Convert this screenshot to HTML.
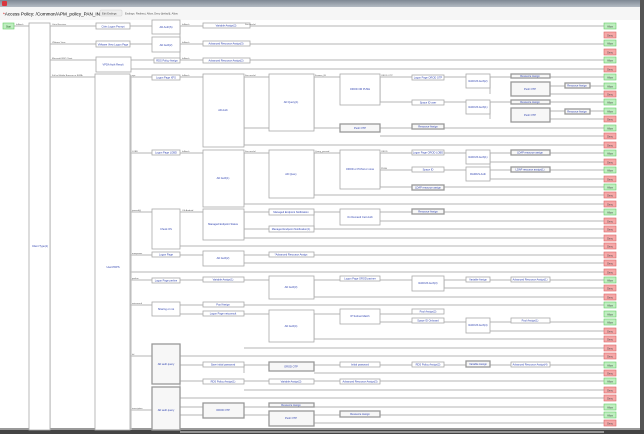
<!DOCTYPE html>
<html><head><meta charset="utf-8"><style>
html,body{margin:0;padding:0;background:#fff;width:644px;height:434px;overflow:hidden;font-family:"Liberation Sans",sans-serif}
</style></head><body>
<svg width="644" height="434" viewBox="0 0 644 434" xmlns="http://www.w3.org/2000/svg" style="display:block">
<defs><linearGradient id="tb" x1="0" y1="0" x2="0" y2="1"><stop offset="0" stop-color="#7e8894"/><stop offset="1" stop-color="#b4bbc3"/></linearGradient></defs>
<rect x="0" y="0" width="644" height="434" fill="#fff"/>
<rect x="0" y="0" width="644" height="7" fill="url(#tb)"/>
<rect x="2" y="1" width="5" height="5" rx="1" fill="#d9363e"/>
<rect x="0" y="7" width="640" height="13" fill="#f6f6f6"/>
<text x="3" y="15.5" font-size="4.6" fill="#000"><tspan fill="#c00">*</tspan>Access Policy: /Common/APM_policy_PAN_IN</text>
<rect x="100" y="10" width="22" height="6" rx="1" fill="#eee" stroke="#ccc" stroke-width=".5"/>
<text x="102" y="14.5" font-size="2.6" fill="#444">Edit Endings</text>
<text x="125" y="14.5" font-size="2.6" fill="#555">Endings: Redirect, Allow, Deny [default], Allow</text>
<rect x="640" y="0" width="4" height="434" fill="#555"/>
<rect x="0" y="430" width="644" height="4" fill="#444"/>
<rect x="0" y="428" width="640" height="2" fill="#999"/>

<g stroke="#c4c4c4" stroke-width="1.2" fill="none">
<path d="M250 26H604M14 26H29M50 26H96M130 26H152M180 26H203M50 44H96M130 44H152M180 44H203M250 44H604M50 60H96M131 60H154M180 60H203M250 60H604M131 69H604M50 77H95M130 77H152M180 77H203M244 77H269M314 77H340M380 77H412M444 77H466M490 77H511M550 77H604M550 86H565M590 86H604M550 94H604M380 102H412M444 102H466M490 102H511M550 102H604M550 111H565M590 111H604M550 119H604M244 128H340M380 128H412M444 128H604M380 136H604M244 145H604M130 153H152M180 153H203M244 153H269M314 153H340M380 153H412M444 153H466M490 153H511M550 153H604M490 162H604M380 170H412M444 170H466M490 170H511M550 170H604M490 179H604M380 187H412M444 187H604M314 195H604M244 204H604M130 212H152M180 212H203M244 212H269M314 212H340M380 212H412M444 212H604M380 221H604M244 229H269M314 229H604M244 238H604M180 246H604M130 255H152M180 255H203M244 255H269M314 255H604M244 263H604M130 272H604M130 280H152M180 280H203M244 280H269M314 280H340M380 280H412M444 280H466M490 280H511M550 280H604M444 288H604M314 297H604M130 305H152M180 305H203M244 305H604M180 314H203M244 314H269M314 314H340M380 314H412M380 322H412M444 322H466M490 322H511M550 322H604M490 331H604M314 339H604M244 348H604M130 356H152M180 356H604M180 365H203M244 365H269M314 365H340M380 365H412M444 365H466M490 365H511M550 365H604M314 373H604M180 381H203M244 381H269M314 381H340M380 381H604M244 390H604M130 410H152M180 398H604M180 407H203M244 407H269M314 407H604M180 415H203M244 415H269M314 415H340M380 415H604M314 423H604M180 432H604"/>
<path d="M50 26V430M131 75V430M180 26V60M244 77V145M244 153V204M244 212V238M314 77V128M314 153V195M314 212V229M380 77V102M380 153V187M490 77V94M490 102V119M490 153V179M444 280V288M314 280V297M314 314V339M244 365V373M180 344V398"/>
</g>

<g fill="#fff" stroke="#aaa" stroke-width=".8">
<rect x="29" y="23" width="21" height="407"/>
<rect x="96" y="23" width="34" height="6"/>
<rect x="96" y="41" width="34" height="6"/>
<rect x="96" y="57" width="35" height="15"/>
<rect x="95" y="74" width="35" height="356"/>
<rect x="152" y="20" width="28" height="14"/>
<rect x="152" y="37" width="28" height="15"/>
<rect x="154" y="58" width="26" height="5"/>
<rect x="152" y="75" width="28" height="5"/>
<rect x="152" y="150" width="28" height="5"/>
<rect x="152" y="209" width="28" height="40"/>
<rect x="152" y="252" width="28" height="5"/>
<rect x="152" y="278" width="28" height="5"/>
<rect x="152" y="302" width="28" height="14"/>
<rect x="203" y="23" width="47" height="5"/>
<rect x="203" y="41" width="47" height="5"/>
<rect x="203" y="58" width="47" height="5"/>
<rect x="203" y="74" width="41" height="73"/>
<rect x="203" y="150" width="41" height="57"/>
<rect x="203" y="209" width="41" height="31"/>
<rect x="203" y="251" width="41" height="15"/>
<rect x="203" y="277" width="41" height="5"/>
<rect x="203" y="302" width="41" height="5"/>
<rect x="203" y="311" width="41" height="5"/>
<rect x="203" y="362" width="41" height="5"/>
<rect x="203" y="379" width="41" height="5"/>
<rect x="269" y="74" width="45" height="57"/>
<rect x="269" y="150" width="45" height="48"/>
<rect x="269" y="209" width="45" height="6"/>
<rect x="269" y="226" width="45" height="6"/>
<rect x="269" y="252" width="45" height="5"/>
<rect x="269" y="276" width="45" height="23"/>
<rect x="269" y="310" width="45" height="32"/>
<rect x="269" y="379" width="45" height="5"/>
<rect x="340" y="74" width="40" height="31"/>
<rect x="340" y="150" width="40" height="39"/>
<rect x="340" y="209" width="40" height="16"/>
<rect x="340" y="276" width="40" height="5"/>
<rect x="340" y="309" width="40" height="15"/>
<rect x="340" y="362" width="40" height="5"/>
<rect x="340" y="379" width="40" height="5"/>
<rect x="412" y="75" width="32" height="5"/>
<rect x="412" y="100" width="32" height="5"/>
<rect x="412" y="150" width="32" height="5"/>
<rect x="412" y="167" width="32" height="5"/>
<rect x="412" y="276" width="32" height="15"/>
<rect x="412" y="309" width="32" height="5"/>
<rect x="412" y="318" width="32" height="5"/>
<rect x="412" y="362" width="32" height="5"/>
<rect x="466" y="74" width="24" height="14"/>
<rect x="466" y="100" width="24" height="14"/>
<rect x="466" y="150" width="24" height="14"/>
<rect x="466" y="167" width="24" height="14"/>
<rect x="466" y="277" width="24" height="5"/>
<rect x="466" y="318" width="24" height="15"/>
<rect x="511" y="277" width="39" height="5"/>
<rect x="511" y="318" width="39" height="5"/>
<rect x="511" y="362" width="39" height="5"/>
</g>
<g fill="#f7f7f7" stroke="#999" stroke-width="1.3">
<rect x="152" y="344" width="28" height="40"/>
<rect x="152" y="387" width="28" height="43"/>
<rect x="203" y="403" width="41" height="15"/>
<rect x="269" y="362" width="45" height="9"/>
<rect x="269" y="403" width="45" height="4"/>
<rect x="269" y="411" width="45" height="15"/>
<rect x="340" y="124" width="40" height="8"/>
<rect x="340" y="411" width="40" height="6"/>
<rect x="412" y="124" width="32" height="5"/>
<rect x="412" y="185" width="32" height="5"/>
<rect x="412" y="209" width="32" height="5"/>
<rect x="466" y="361" width="24" height="6"/>
<rect x="511" y="74" width="39" height="4"/>
<rect x="511" y="82" width="39" height="14"/>
<rect x="511" y="100" width="39" height="4"/>
<rect x="511" y="108" width="39" height="14"/>
<rect x="511" y="150" width="39" height="5"/>
<rect x="511" y="167" width="39" height="5"/>
<rect x="565" y="83" width="25" height="5"/>
<rect x="565" y="109" width="25" height="5"/>
</g>

<g font-size="2.6" fill="#2b3fae" text-anchor="middle">
<text x="113" y="27.5">Citrix Logon Prompt</text>
<text x="113" y="45.5">VMware View Logon Page</text>
<text x="113" y="65.5">VPDA Auth Result</text>
<text x="113" y="268">User.PDPS</text>
<text x="40" y="247">Client Type(1)</text>
<text x="166" y="28">AD Auth(S)</text>
<text x="166" y="46">AD Auth(2)</text>
<text x="167" y="61.5">RDS Policy Assign</text>
<text x="166" y="78.5">Logon Page XFS</text>
<text x="166" y="153.5">Logon Page LOBD</text>
<text x="166" y="230">Check OS</text>
<text x="166" y="255.5">Logon Page</text>
<text x="166" y="281.5">Logon Page perline</text>
<text x="166" y="310">Sharing or not</text>
<text x="166" y="365">AD auth query</text>
<text x="166" y="411">AD auth query</text>
<text x="226" y="26.5">Variable Assign(2)</text>
<text x="226" y="44.5">Advanced Resource Assign(3)</text>
<text x="226" y="61.5">Advanced Resource Assign(2)</text>
<text x="223" y="111">AD Auth</text>
<text x="223" y="179">AD Auth(1)</text>
<text x="223" y="225">Managed Endpoint Status</text>
<text x="223" y="259">AD Auth(2)</text>
<text x="223" y="280.5">Variable Assign(1)</text>
<text x="223" y="305.5">Pool Assign</text>
<text x="223" y="314.5">Logon Page netconsult</text>
<text x="223" y="365.5">Save initial password</text>
<text x="223" y="382.5">RDS Policy Assign(1)</text>
<text x="223" y="411">OROD OTP</text>
<text x="291" y="103">AD Query(1)</text>
<text x="291" y="175">AD Query</text>
<text x="291" y="213">Managed Endpoint Notification</text>
<text x="291" y="230">Managed Endpoint Notification(1)</text>
<text x="291" y="255.5">*Advanced Resource Assign</text>
<text x="291" y="288">AD Auth(3)</text>
<text x="291" y="327">AD Auth(4)</text>
<text x="291" y="367.5">OROD OTP</text>
<text x="291" y="382.5">Variable Assign(2)</text>
<text x="291" y="406">Resource Assign</text>
<text x="291" y="419">Push OTP</text>
<text x="360" y="90">OROD OR PUSH</text>
<text x="360" y="129">Push OTP</text>
<text x="360" y="170">OROD or PUSH or none</text>
<text x="360" y="218">On Demand Cert Auth</text>
<text x="360" y="279.5">Logon Page OROD partner</text>
<text x="360" y="317">IP Subnet Match</text>
<text x="360" y="365.5">Initial password</text>
<text x="360" y="382.5">Advanced Resource Assign(3)</text>
<text x="360" y="415">Resource Assign</text>
<text x="428" y="78.5">Logon Page OROD OTP</text>
<text x="428" y="103.5">Space ID user</text>
<text x="428" y="127.5">Resource Assign</text>
<text x="428" y="153.5">Logon Page OROD LOBD</text>
<text x="428" y="170.5">Space ID</text>
<text x="428" y="188.5">LDAP resource assign</text>
<text x="428" y="212.5">Resource Assign</text>
<text x="428" y="284">RADIUS Auth(3)</text>
<text x="428" y="312.5">Pool Assign(2)</text>
<text x="428" y="321.5">Space ID Onboard</text>
<text x="428" y="365.5">RDS Policy Assign(2)</text>
<text x="478" y="82">RADIUS Auth(2)</text>
<text x="478" y="108">RADIUS Auth(1)</text>
<text x="478" y="158">RADIUS Auth(1)</text>
<text x="478" y="175">RADIUS Auth</text>
<text x="478" y="280.5">Variable Assign</text>
<text x="478" y="326">RADIUS Auth(4)</text>
<text x="478" y="365">Variable Assign</text>
<text x="530" y="77">Resource Assign</text>
<text x="530" y="90">Push OTP</text>
<text x="530" y="103">Resource Assign</text>
<text x="530" y="116">Push OTP</text>
<text x="530" y="153.5">LDAP resource assign</text>
<text x="530" y="170.5">LDAP resource assign(1)</text>
<text x="530" y="280.5">Advanced Resource Assign(1)</text>
<text x="530" y="321.5">Pool Assign(1)</text>
<text x="530" y="365.5">Advanced Resource Assign(4)</text>
<text x="577" y="86.5">Resource Assign</text>
<text x="577" y="112.5">Resource Assign</text>
</g>
<g font-size="2.2" fill="#555">
<text x="16" y="25">fallback</text><text x="52" y="25">Citrix Receiver</text><text x="52" y="43">VMware View</text><text x="52" y="59">Microsoft RDP Client</text><text x="52" y="76">Full or Mobile Browser or IEWA</text>
<text x="132" y="76">xps</text><text x="132" y="152">LOBD</text><text x="132" y="211">jamsoft(i)</text><text x="132" y="254">manpower</text><text x="132" y="279">perline</text><text x="132" y="304">netconsult</text><text x="132" y="355">lol</text><text x="132" y="409">imscription</text>
<text x="182" y="25">fallback</text><text x="182" y="43">fallback</text><text x="182" y="59">fallback</text><text x="182" y="76">fallback</text><text x="182" y="152">fallback</text><text x="182" y="211">OS Android</text>
<text x="245" y="25">Successful</text><text x="245" y="76">Successful</text><text x="245" y="152">Successful</text>
<text x="315" y="76">Frames_IB</text><text x="315" y="152">Query_passed</text><text x="381" y="76">OROD OTP</text><text x="381" y="152">OROD</text><text x="381" y="169">PUSH</text>
</g>
<g font-size="2.4" fill="#1a5a1a" text-anchor="middle">
<rect x="3" y="23" width="11" height="6" fill="#bfeec0" stroke="#6c6" stroke-width=".6"/><text x="8.5" y="27.3">Start</text>
</g>
<g font-size="2.4" text-anchor="middle" stroke-width=".6">
<rect x="604" y="23" width="12" height="6" fill="#bfeec0" stroke="#6c6"/>
<rect x="604" y="32" width="12" height="6" fill="#f5a8a8" stroke="#d66"/>
<rect x="604" y="40" width="12" height="6" fill="#bfeec0" stroke="#6c6"/>
<rect x="604" y="49" width="12" height="6" fill="#f5a8a8" stroke="#d66"/>
<rect x="604" y="57" width="12" height="6" fill="#bfeec0" stroke="#6c6"/>
<rect x="604" y="66" width="12" height="6" fill="#f5a8a8" stroke="#d66"/>
<rect x="604" y="74" width="12" height="6" fill="#bfeec0" stroke="#6c6"/>
<rect x="604" y="83" width="12" height="6" fill="#bfeec0" stroke="#6c6"/>
<rect x="604" y="91" width="12" height="6" fill="#f5a8a8" stroke="#d66"/>
<rect x="604" y="99" width="12" height="6" fill="#bfeec0" stroke="#6c6"/>
<rect x="604" y="108" width="12" height="6" fill="#bfeec0" stroke="#6c6"/>
<rect x="604" y="116" width="12" height="6" fill="#f5a8a8" stroke="#d66"/>
<rect x="604" y="125" width="12" height="6" fill="#bfeec0" stroke="#6c6"/>
<rect x="604" y="133" width="12" height="6" fill="#f5a8a8" stroke="#d66"/>
<rect x="604" y="142" width="12" height="6" fill="#f5a8a8" stroke="#d66"/>
<rect x="604" y="150" width="12" height="6" fill="#bfeec0" stroke="#6c6"/>
<rect x="604" y="159" width="12" height="6" fill="#f5a8a8" stroke="#d66"/>
<rect x="604" y="167" width="12" height="6" fill="#bfeec0" stroke="#6c6"/>
<rect x="604" y="176" width="12" height="6" fill="#f5a8a8" stroke="#d66"/>
<rect x="604" y="184" width="12" height="6" fill="#bfeec0" stroke="#6c6"/>
<rect x="604" y="192" width="12" height="6" fill="#f5a8a8" stroke="#d66"/>
<rect x="604" y="201" width="12" height="6" fill="#f5a8a8" stroke="#d66"/>
<rect x="604" y="209" width="12" height="6" fill="#bfeec0" stroke="#6c6"/>
<rect x="604" y="218" width="12" height="6" fill="#f5a8a8" stroke="#d66"/>
<rect x="604" y="226" width="12" height="6" fill="#f5a8a8" stroke="#d66"/>
<rect x="604" y="235" width="12" height="6" fill="#f5a8a8" stroke="#d66"/>
<rect x="604" y="243" width="12" height="6" fill="#f5a8a8" stroke="#d66"/>
<rect x="604" y="252" width="12" height="6" fill="#f5a8a8" stroke="#d66"/>
<rect x="604" y="260" width="12" height="6" fill="#f5a8a8" stroke="#d66"/>
<rect x="604" y="269" width="12" height="6" fill="#f5a8a8" stroke="#d66"/>
<rect x="604" y="277" width="12" height="6" fill="#bfeec0" stroke="#6c6"/>
<rect x="604" y="285" width="12" height="6" fill="#f5a8a8" stroke="#d66"/>
<rect x="604" y="294" width="12" height="6" fill="#f5a8a8" stroke="#d66"/>
<rect x="604" y="302" width="12" height="6" fill="#bfeec0" stroke="#6c6"/>
<rect x="604" y="311" width="12" height="6" fill="#bfeec0" stroke="#6c6"/>
<rect x="604" y="319" width="12" height="6" fill="#bfeec0" stroke="#6c6"/>
<rect x="604" y="328" width="12" height="6" fill="#f5a8a8" stroke="#d66"/>
<rect x="604" y="336" width="12" height="6" fill="#f5a8a8" stroke="#d66"/>
<rect x="604" y="345" width="12" height="6" fill="#f5a8a8" stroke="#d66"/>
<rect x="604" y="353" width="12" height="6" fill="#f5a8a8" stroke="#d66"/>
<rect x="604" y="362" width="12" height="6" fill="#bfeec0" stroke="#6c6"/>
<rect x="604" y="370" width="12" height="6" fill="#f5a8a8" stroke="#d66"/>
<rect x="604" y="378" width="12" height="6" fill="#bfeec0" stroke="#6c6"/>
<rect x="604" y="387" width="12" height="6" fill="#f5a8a8" stroke="#d66"/>
<rect x="604" y="395" width="12" height="6" fill="#f5a8a8" stroke="#d66"/>
<rect x="604" y="404" width="12" height="6" fill="#bfeec0" stroke="#6c6"/>
<rect x="604" y="412" width="12" height="6" fill="#bfeec0" stroke="#6c6"/>
<rect x="604" y="420" width="12" height="6" fill="#f5a8a8" stroke="#d66"/>
</g>
<g font-size="2.4" text-anchor="middle" fill="#444">
<text x="610" y="27.3">Allow</text><text x="610" y="36.3">Deny</text><text x="610" y="44.3">Allow</text><text x="610" y="53.3">Deny</text><text x="610" y="61.3">Allow</text><text x="610" y="70.3">Deny</text><text x="610" y="78.3">Allow</text><text x="610" y="87.3">Allow</text><text x="610" y="95.3">Deny</text><text x="610" y="103.3">Allow</text><text x="610" y="112.3">Allow</text><text x="610" y="120.3">Deny</text>
<text x="610" y="129.3">Allow</text><text x="610" y="137.3">Deny</text><text x="610" y="146.3">Deny</text><text x="610" y="154.3">Allow</text><text x="610" y="163.3">Deny</text><text x="610" y="171.3">Allow</text><text x="610" y="180.3">Deny</text><text x="610" y="188.3">Allow</text><text x="610" y="196.3">Deny</text><text x="610" y="205.3">Deny</text><text x="610" y="213.3">Allow</text><text x="610" y="222.3">Deny</text>
<text x="610" y="230.3">Deny</text><text x="610" y="239.3">Deny</text><text x="610" y="247.3">Deny</text><text x="610" y="256.3">Deny</text><text x="610" y="264.3">Deny</text><text x="610" y="273.3">Deny</text><text x="610" y="281.3">Allow</text><text x="610" y="289.3">Deny</text><text x="610" y="298.3">Deny</text><text x="610" y="306.3">Allow</text><text x="610" y="315.3">Allow</text><text x="610" y="323.3">Allow</text>
<text x="610" y="332.3">Deny</text><text x="610" y="340.3">Deny</text><text x="610" y="349.3">Deny</text><text x="610" y="357.3">Deny</text><text x="610" y="366.3">Allow</text><text x="610" y="374.3">Deny</text><text x="610" y="382.3">Allow</text><text x="610" y="391.3">Deny</text><text x="610" y="399.3">Deny</text><text x="610" y="408.3">Allow</text><text x="610" y="416.3">Allow</text><text x="610" y="424.3">Deny</text>
</g>
</svg>
</body></html>
